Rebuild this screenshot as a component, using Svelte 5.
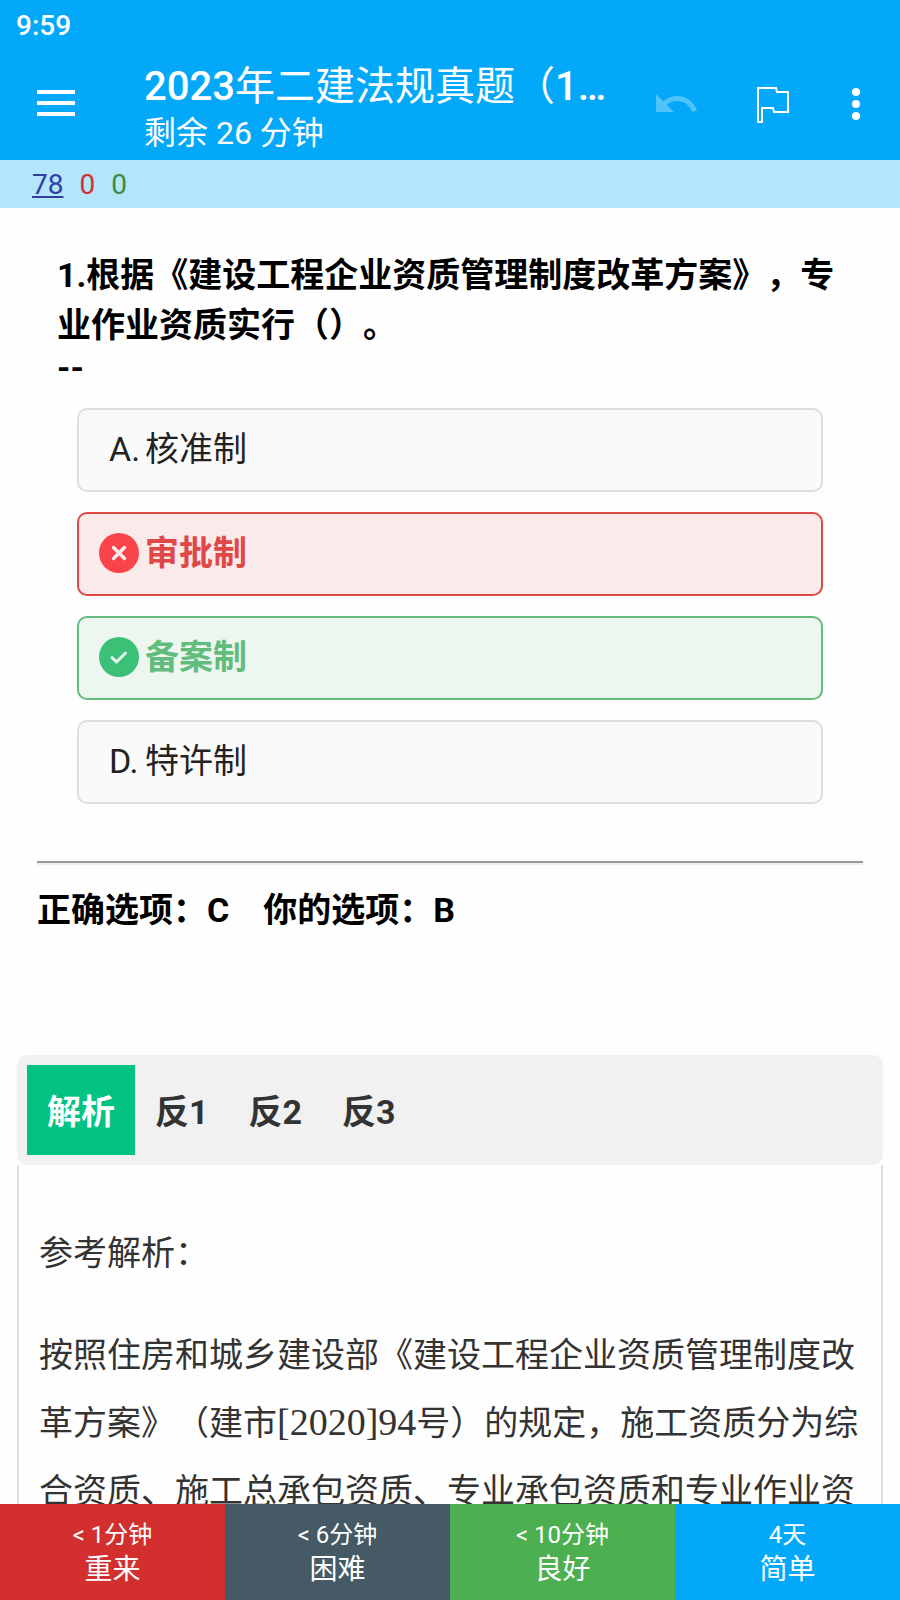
<script>
  const options = [
    { letter: "A", text: "核准制", state: "" },
    { letter: "B", text: "审批制", state: "wrong" },
    { letter: "C", text: "备案制", state: "right" },
    { letter: "D", text: "特许制", state: "" },
  ];

  const tabs = ["解析", "反1", "反2", "反3"];
  let activeTab = $state(0);

  const answers = [
    { time: "< 1分钟", label: "重来", kind: "again" },
    { time: "< 6分钟", label: "困难", kind: "hard" },
    { time: "< 10分钟", label: "良好", kind: "good" },
    { time: "4天", label: "简单", kind: "easy" },
  ];
</script>

<div class="reviewer">
  <div class="status">9:59</div>
  <header>
    <button class="menu" aria-label="菜单">
      <svg width="48" height="48" viewBox="0 0 48 48">
        <path d="M5 10h38v4H5zM5 21h38v4H5zM5 32h38v4H5z" fill="#fff" />
      </svg>
    </button>
    <div class="titles">
      <h1><b>2023</b>年二建法规真题（<b>1…</b></h1>
      <p>剩余 26 分钟</p>
    </div>
    <button class="action" aria-label="撤销" disabled>
      <svg width="48" height="48" viewBox="0 0 24 24">
        <path
          d="M12.5 8c-2.65 0-5.05.99-6.9 2.6L2 7v9h9l-3.62-3.62c1.39-1.16 3.16-1.88 5.12-1.88 3.54 0 6.55 2.31 7.6 5.5l2.37-.78C21.08 11.03 17.15 8 12.5 8z"
          fill="#fff"
          fill-opacity="0.3"
        />
      </svg>
    </button>
    <button class="action" aria-label="标记">
      <svg width="48" height="48" viewBox="0 0 48 48">
        <path
          d="M10 8H28L29 12H40V32H26L25 28H14V42H10Z"
          fill="none"
          stroke="#fff"
          stroke-width="2"
        />
      </svg>
    </button>
    <button class="action more" aria-label="更多">
      <svg width="48" height="48" viewBox="0 0 48 48" fill="#fff">
        <circle cx="24" cy="12" r="4" />
        <circle cx="24" cy="24" r="4" />
        <circle cx="24" cy="36" r="4" />
      </svg>
    </button>
  </header>
  <div class="counts">
    <span class="new">78</span>
    <span class="learn">0</span>
    <span class="due">0</span>
  </div>

  <main>
    <div class="question">
      <p>1.根据《建设工程企业资质管理制度改革方案》，专业作业资质实行（）。</p>
      <p class="dashes">--</p>
    </div>

    <div class="options">
      {#each options as option}
        <button class="option {option.state}">
          {#if option.state === "wrong"}
            <svg width="40" height="40" viewBox="0 0 40 40">
              <circle cx="20" cy="20" r="20" fill="#f9444b" />
              <path
                d="M14.5 14.5L25.5 25.5M25.5 14.5L14.5 25.5"
                stroke="#fbeaea"
                stroke-width="3.4"
                stroke-linecap="round"
              />
            </svg>
          {:else if option.state === "right"}
            <svg width="40" height="40" viewBox="0 0 40 40">
              <circle cx="20" cy="20" r="20" fill="#3ac177" />
              <path
                d="M13 20.5L17.5 25L26.5 16"
                fill="none"
                stroke="#edf7f0"
                stroke-width="3"
                stroke-linecap="round"
                stroke-linejoin="round"
              />
            </svg>
          {:else}
            <span class="letter">{option.letter}.</span>
          {/if}
          <span>{option.text}</span>
        </button>
      {/each}
    </div>

    <hr />
    <p class="result">正确选项：C　你的选项：B</p>

    <div class="notes">
      <div class="tabs" role="tablist">
        {#each tabs as tab, i}
          <button
            role="tab"
            aria-selected={activeTab === i}
            class:active={activeTab === i}
            onclick={() => (activeTab = i)}>{tab}</button
          >
        {/each}
      </div>
      <div class="note" role="tabpanel">
        <p>参考解析：</p>
        <p>
          按照住房和城乡建设部《建设工程企业资质管理制度改革方案》（建市<span
            class="number">[2020]94</span
          >号）的规定，施工资质分为综合资质、施工总承包资质、专业承包资质和专业作业资质。
        </p>
      </div>
    </div>
  </main>

  <footer>
    {#each answers as answer}
      <button class={answer.kind}>
        <span class="time">{answer.time}</span>
        <span class="ease">{answer.label}</span>
      </button>
    {/each}
  </footer>
</div>

<style>
  :global(body) {
    background: #fefefe;
  }
  .reviewer {
    display: flex;
    flex-direction: column;
    height: 100vh;
    font-family: Roboto, "Noto Sans CJK SC", sans-serif;
    text-spacing-trim: space-all;
  }
  button {
    margin: 0;
    padding: 0;
    border: none;
    background: none;
    font: inherit;
    color: inherit;
  }
  h1,
  p {
    margin: 0;
  }
  svg {
    display: block;
  }

  /* top bar */
  .status {
    padding: 4px 16px 0;
    background: #03a9f8;
    color: #fff;
    font-size: 28px;
    font-weight: 500;
    line-height: 44px;
  }
  header {
    display: flex;
    align-items: center;
    height: 112px;
    padding-right: 8px;
    background: #03a9f8;
    color: #fff;
  }
  .menu {
    padding: 0 32px;
  }
  .titles {
    flex: 1;
    min-width: 0;
    padding: 8px 0 0 32px;
    white-space: nowrap;
  }
  h1 {
    overflow: hidden;
    font-size: 40px;
    font-weight: 400;
    line-height: 50px;
  }
  h1 b {
    font-weight: 500;
  }
  .titles p {
    font-size: 32px;
    line-height: 42px;
  }
  .action {
    display: flex;
    justify-content: center;
    width: 96px;
  }
  .more {
    width: 72px;
  }
  .counts {
    display: flex;
    gap: 16px;
    padding: 2px 32px 0;
    background: #b3e5fc;
    font-size: 28px;
    line-height: 46px;
  }
  .new {
    color: #303f9f;
    text-decoration: underline;
  }
  .learn {
    color: #d32f2f;
  }
  .due {
    color: #388e3c;
  }

  /* card */
  main {
    flex: 1;
    min-height: 0;
    overflow-y: auto;
    scrollbar-width: none;
    font-size: 34px;
  }
  .question {
    padding: 42px 57px 0;
    color: #000;
    font-weight: 700;
    line-height: 50px;
  }
  .question .dashes {
    line-height: 34px;
  }
  .options {
    display: grid;
    gap: 20px;
    padding: 24px 77px 0;
  }
  .option {
    display: flex;
    align-items: center;
    gap: 6px;
    height: 84px;
    padding: 0 20px 2px;
    border: 2px solid #ddd;
    border-radius: 10px;
    background: #fafafa;
    color: #222;
    line-height: 34px;
    text-align: left;
  }
  .letter {
    box-sizing: border-box;
    width: 40px;
    padding-left: 10px;
    white-space: nowrap;
  }
  .wrong {
    border-color: #e04848;
    background: #fbeaea;
    color: #e04848;
    font-weight: 700;
  }
  .right {
    border-color: #62bd7c;
    background: #edf7f0;
    color: #62bd7c;
    font-weight: 700;
  }
  hr {
    margin: 57px 37px 0;
    border: solid #9a9a9a;
    border-width: 2px 0;
    border-bottom-color: #eee;
  }
  .result {
    padding: 20px 37px 0;
    color: #000;
    font-weight: 700;
    line-height: 50px;
  }
  .notes {
    margin: 120px 17px 0;
    color: #333;
  }
  .tabs {
    display: flex;
    padding: 10px;
    border-radius: 10px;
    background: #f1f1f1;
  }
  .tabs button {
    padding: 4px 20px 0;
    font-weight: 700;
    line-height: 86px;
  }
  .tabs .active {
    background: #02c383;
    color: #fff;
  }
  .note {
    padding: 54px 20px;
    border: solid #ddd;
    border-width: 0 2px;
    line-height: 68px;
  }
  .note p + p {
    margin-top: 34px;
  }
  .number {
    font-family: "Liberation Serif", serif;
    font-size: 38px;
    line-height: 1;
  }

  /* answer buttons */
  footer {
    display: grid;
    grid-template-columns: repeat(4, 1fr);
    height: 96px;
    color: #fff;
  }
  footer button {
    display: flex;
    flex-direction: column;
    align-items: center;
    justify-content: center;
    padding-top: 2px;
  }
  .time {
    font-size: 24px;
    line-height: 34px;
  }
  .ease {
    font-size: 28px;
    line-height: 36px;
  }
  .again {
    background: #d32f2f;
  }
  .hard {
    background: #455a64;
  }
  .good {
    background: #4caf50;
  }
  .easy {
    background: #03a9f8;
  }
</style>
